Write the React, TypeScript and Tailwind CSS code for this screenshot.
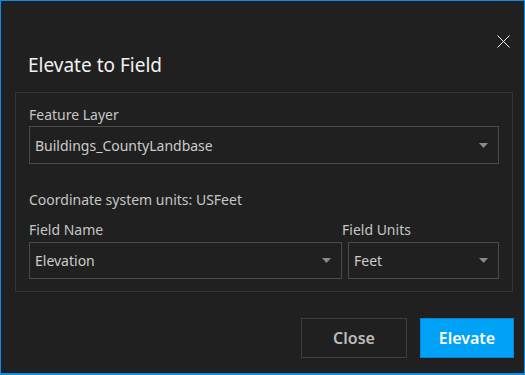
import React from "react";

function Chevron() {
  return (
    <svg width="9" height="5" viewBox="0 0 9 5" className="shrink-0">
      <path d="M0 0 H9 L4.5 5 Z" fill="#8a8a8a" />
    </svg>
  );
}

function Combo({ value, h }: { value: string; h: string }) {
  return (
    <div
      className={`flex items-center justify-between border border-[#4a4a4a] pl-[5px] pr-[10px] text-[14px] text-[#cccccc] ${h}`}
    >
      <span>{value}</span>
      <Chevron />
    </div>
  );
}

export default function App() {
  return (
    <div
      className="w-[525px] h-[375px] bg-[#202020] border border-b-2 border-[#0c8fe8] flex flex-col"
      style={{ fontFamily: '"Noto Sans", "Open Sans", sans-serif' }}
    >
      <div className="flex justify-end pt-[34px] pr-[14px]">
        <svg width="13" height="13" viewBox="0 0 13 13">
          <path d="M0.5 0.5 L12.5 12.5 M12.5 0.5 L0.5 12.5" stroke="#f0f0f0" strokeWidth="1" />
        </svg>
      </div>
      <div className="mt-[3px] pl-[27px] text-[19px] leading-[28px] text-[#f2f2f2]">Elevate to Field</div>
      <div className="mt-[13px] ml-[14px] w-[498px] border border-[#363636] px-[13px] pt-[12px] pb-[12px] flex flex-col">
        <div className="text-[14px] leading-[20px] text-[#c6c6c6]">Feature Layer</div>
        <div className="mt-[1px]">
          <Combo value="Buildings_CountyLandbase" h="h-[38px]" />
        </div>
        <div className="mt-[26px] text-[14px] leading-[20px] text-[#c6c6c6]">Coordinate system units: USFeet</div>
        <div className="mt-[10px] grid grid-cols-[313px_151px] gap-x-[6px]">
          <div className="text-[14px] leading-[20px] text-[#c6c6c6]">Field Name</div>
          <div className="-ml-[6px] text-[14px] leading-[20px] text-[#c6c6c6]">Field Units</div>
          <div className="mt-[2px]">
            <Combo value="Elevation" h="h-[37px]" />
          </div>
          <div className="mt-[2px]">
            <Combo value="Feet" h="h-[37px]" />
          </div>
        </div>
      </div>
      <div className="mt-[26px] flex justify-end gap-[13px] pr-[10px]">
        <button className="w-[106px] h-[40px] border border-[#3e3e3e] text-[16px] font-semibold text-[#bdbdbd]">
          Close
        </button>
        <button className="w-[94px] h-[40px] border border-[#0a84d0] bg-[#00a2f8] text-[16px] font-semibold text-white">
          Elevate
        </button>
      </div>
    </div>
  );
}
